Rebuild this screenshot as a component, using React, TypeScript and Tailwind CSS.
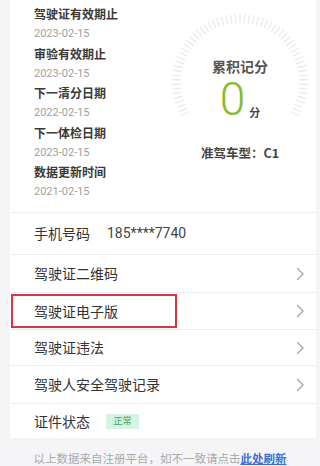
import type { ReactNode } from 'react'

const DATES = [
  { label: '驾驶证有效期止', value: '2023-02-15' },
  { label: '审验有效期止', value: '2023-02-15' },
  { label: '下一清分日期', value: '2022-02-15' },
  { label: '下一体检日期', value: '2023-02-15' },
  { label: '数据更新时间', value: '2021-02-15' },
]

const FONT = { fontFamily: '"Noto Sans CJK SC", "Noto Sans", sans-serif' }

function Gauge() {
  const ticks = []
  for (let a = -120; a <= 120; a += 4) {
    const r = (a * Math.PI) / 180
    const x1 = 70 + Math.sin(r) * 59
    const y1 = 70 - Math.cos(r) * 59
    const x2 = 70 + Math.sin(r) * 68
    const y2 = 70 - Math.cos(r) * 68
    ticks.push(<line key={a} x1={x1} y1={y1} x2={x2} y2={y2} stroke="#ebebeb" strokeWidth="1.4" />)
  }
  return (
    <svg className="absolute inset-0" width="140" height="140" viewBox="0 0 140 140">
      {ticks}
    </svg>
  )
}

function Chevron() {
  return (
    <svg width="9" height="14" viewBox="0 0 9 14" fill="none">
      <polyline points="1.5,1.5 7,7 1.5,12.5" stroke="#a8a8a8" strokeWidth="1.4" strokeLinecap="round" strokeLinejoin="round" />
    </svg>
  )
}

function Row({ children, arrow, className = '' }: { children: ReactNode; arrow?: boolean; className?: string }) {
  return (
    <div className={`relative flex items-center justify-between border-t border-[#efefef] pl-6 pr-[11px] ${className}`}>
      <div className="flex items-center text-[14px] text-[#333]">{children}</div>
      {arrow && <Chevron />}
    </div>
  )
}

export default function App() {
  return (
    <div className="min-h-[466px] w-[320px] overflow-hidden bg-[#f5f5f7]" style={FONT}>
      <div className="ml-[10px] mr-[4px] bg-white">
        <div className="flex h-[212px] pt-1">
          <div className="flex w-[150px] flex-col pl-6">
            {DATES.map(d => (
              <div key={d.label}>
                <div className="text-[12px] font-bold leading-[20px] text-[#3a3a3a]">{d.label}</div>
                <div className="text-[11px] leading-[19.5px] text-[#a0a0a0]" style={{ fontFamily: 'Roboto, "Noto Sans", sans-serif' }}>
                  {d.value}
                </div>
              </div>
            ))}
          </div>
          <div className="flex flex-col items-center pl-[10px] pt-[8px]">
            <div className="relative flex h-[140px] w-[140px] flex-col items-center pt-[44px]">
              <Gauge />
              <div className="relative text-[14px] font-bold leading-[20px] text-[#555]">累积记分</div>
              <div className="relative flex items-end">
                <span className="text-[46px] font-light leading-[46px] text-[#86bc2e]" style={{ fontFamily: 'Roboto, sans-serif' }}>0</span>
                <span className="mb-[2px] ml-[4px] text-[11px] font-bold text-[#444]">分</span>
              </div>
            </div>
            <div className="mt-[-8px] text-[12.5px] font-bold text-[#444]">准驾车型：C1</div>
          </div>
        </div>

        <Row className="h-[42px]">
          <span>手机号码</span>
          <span className="ml-[17px] text-[#444]" style={{ fontFamily: 'Roboto, sans-serif' }}>185****7740</span>
        </Row>
        <Row arrow className="h-[38px]">驾驶证二维码</Row>
        <Row arrow className="h-[37px]">
          驾驶证电子版
          <div className="absolute left-px top-[1px] h-[34px] w-[166px] border-2 border-[#d8363f]" />
        </Row>
        <Row arrow className="h-[36px]">驾驶证违法</Row>
        <Row arrow className="h-[38px]">驾驶人安全驾驶记录</Row>
        <Row className="h-[35px]">
          <span>证件状态</span>
          <span className="ml-[16px] flex h-[15px] w-[33px] items-center justify-center bg-[#d6f2e1] text-[9px] text-[#3aa567]">正常</span>
        </Row>
      </div>
      <div className="mt-[12px] text-center text-[11.5px] text-[#aaa]">
        以上数据来自注册平台，如不一致请点击
        <span className="font-bold text-[#3b6fd6] underline">此处刷新</span>
      </div>
    </div>
  )
}
